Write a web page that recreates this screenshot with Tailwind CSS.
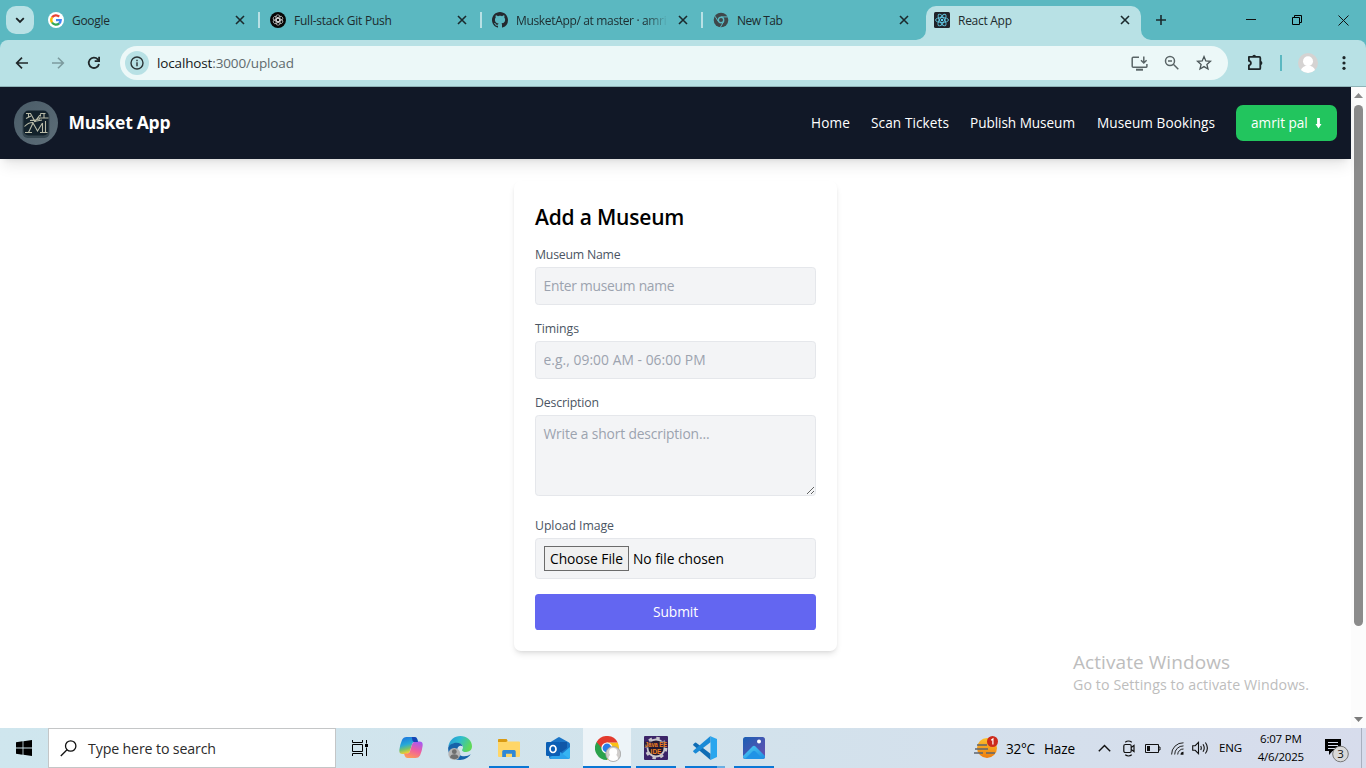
<!DOCTYPE html>
<html lang="en">
<head>
<meta charset="utf-8">
<title>React App</title>
<script src="https://cdn.jsdelivr.net/npm/@tailwindcss/browser@4"></script>
</head>
<body class="w-[1366px] h-[768px] overflow-hidden bg-white flex flex-col font-['Open_Sans','Noto_Sans',sans-serif]">

<!-- Tab strip -->
<div class="h-10 shrink-0 bg-[#5bb8c1] flex text-xs leading-4 text-[#1d2b2e]">
  <div class="w-10 shrink-0 pl-1.5 pt-1.5">
    <div class="size-7 rounded-[10px] bg-[#b8e1e5] flex items-center justify-center">
      <svg class="size-3" viewBox="0 0 12 12" fill="none" stroke="#1b2224" stroke-width="1.8"><path d="M2.2 4.2 6 8l3.8-3.8"/></svg>
    </div>
  </div>
  <div class="w-[222px] shrink-0 flex items-center pl-2 pr-0.5">
    <svg class="size-4 shrink-0" viewBox="0 0 16 16"><circle cx="8" cy="8" r="8" fill="#fff"/><g fill="none" stroke-width="2.3"><path d="M4.05 5.4A4.7 4.7 0 0 1 11.2 4.6" stroke="#ea4335"/><path d="M4.1 10.6A4.7 4.7 0 0 1 4.1 5.3" stroke="#fbbc05"/><path d="M11.2 11.4A4.7 4.7 0 0 1 4 10.500" stroke="#34a853"/><path d="M8 8.2h4.7A4.7 4.7 0 0 1 11.1 11.5" stroke="#4285f4"/></g></svg>
    <span class="ml-2 flex-1 pt-0.5 tracking-[-0.29px]">Google</span>
    <svg class="size-4" viewBox="0 0 16 16" stroke="#1b2a2d" stroke-width="1.6"><path d="m4 4 8 8M12 4l-8 8"/></svg>
    <span class="ml-[10px] w-0.5 h-4 bg-[#b8e1e5]"></span>
  </div>
  <div class="w-[222px] shrink-0 flex items-center pl-2 pr-0.5">
    <svg class="size-4 shrink-0" viewBox="0 0 16 16"><circle cx="8" cy="8" r="8" fill="#070707"/><g fill="none" stroke="#d6d6d6" stroke-width=".7"><rect x="5.9" y="2.800" width="4" height="7" rx="2"/><rect x="5.9" y="2.800" width="4" height="7" rx="2" transform="rotate(60 8 8)"/><rect x="5.9" y="2.800" width="4" height="7" rx="2" transform="rotate(120 8 8)"/><rect x="5.9" y="2.800" width="4" height="7" rx="2" transform="rotate(180 8 8)"/><rect x="5.9" y="2.800" width="4" height="7" rx="2" transform="rotate(240 8 8)"/><rect x="5.9" y="2.800" width="4" height="7" rx="2" transform="rotate(300 8 8)"/></g></svg>
    <span class="ml-2 flex-1 pt-0.5 tracking-[-0.23px]">Full-stack Git Push</span>
    <svg class="size-4" viewBox="0 0 16 16" stroke="#1b2a2d" stroke-width="1.6"><path d="m4 4 8 8M12 4l-8 8"/></svg>
    <span class="ml-[10px] w-0.5 h-4 bg-[#b8e1e5]"></span>
  </div>
  <div class="w-[221px] shrink-0 flex items-center pl-2 pr-0.5">
    <svg class="size-4 shrink-0" viewBox="0 0 16 16" fill="#24292f"><path d="M8 0C3.580 0 0 3.580 0 8c0 3.540 2.290 6.530 5.470 7.590.4.070.55-.17.55-.38 0-.19-.010-.82-.010-1.490-2.010.37-2.530-.49-2.690-.94-.090-.23-.48-.94-.82-1.130-.28-.15-.68-.52-.010-.53.63-.010 1.080.58 1.230.82.72 1.210 1.870.87 2.330.66.070-.52.28-.87.510-1.070-1.780-.2-3.640-.89-3.640-3.950 0-.87.310-1.590.82-2.150-.080-.2-.36-1.020.080-2.120 0 0 .67-.21 2.200.82.64-.18 1.320-.27 2-.27s1.360.090 2 .27c1.530-1.040 2.200-.82 2.200-.82.44 1.100.16 1.920.080 2.120.51.56.82 1.270.82 2.150 0 3.070-1.870 3.750-3.650 3.950.29.25.54.73.54 1.480 0 1.070-.010 1.930-.010 2.200 0 .21.15.46.55.38A8.010 8.010 0 0 0 16 8c0-4.420-3.580-8-8-8z"/></svg>
    <span class="ml-2 w-[152px] pt-0.5 whitespace-nowrap tracking-[-0.34px] bg-linear-to-r from-[#1d2b2e] from-85% to-transparent bg-clip-text text-transparent">MusketApp/ at master · amri</span>
    <svg class="size-4 ml-auto" viewBox="0 0 16 16" stroke="#1b2a2d" stroke-width="1.6"><path d="m4 4 8 8M12 4l-8 8"/></svg>
    <span class="ml-[10px] w-0.5 h-4 bg-[#b8e1e5]"></span>
  </div>
  <div class="w-[221px] shrink-0 flex items-center pl-2">
    <svg class="size-4 shrink-0" viewBox="0 0 16 16"><circle cx="8" cy="8" r="7.3" fill="#3f474a"/><circle cx="8" cy="8" r="2.700" fill="#3f474a" stroke="#5bb8c1" stroke-width="1.400"/><path d="M8 4.900h7M5.300 9.500 2 4.200M10.700 9.500l-3.500 6" stroke="#5bb8c1" stroke-width="1" fill="none"/></svg>
    <span class="ml-2 flex-1 pt-0.5 tracking-[-0.5px]">New Tab</span>
    <svg class="size-4 mr-[14px]" viewBox="0 0 16 16" stroke="#1b2a2d" stroke-width="1.6"><path d="m4 4 8 8M12 4l-8 8"/></svg>
  </div>
  <div class="relative w-[215px] shrink-0 mt-1.5 h-[34px] rounded-t-[10px] bg-[#b8e1e5] flex items-center pl-2 pb-[6px]">
    <svg class="absolute -left-2.5 bottom-0 size-2.5" viewBox="0 0 10 10" fill="#b8e1e5"><path d="M10 0v10H0A10 10 0 0 0 10 0z"/></svg>
    <svg class="absolute -right-2.5 bottom-0 size-2.5" viewBox="0 0 10 10" fill="#b8e1e5"><path d="M0 0v10h10A10 10 0 0 1 0 0z"/></svg>
    <svg class="size-4 shrink-0" viewBox="0 0 16 16"><rect width="16" height="16" rx="1.5" fill="#20232a"/><g fill="none" stroke="#61c6e0" stroke-width=".9"><ellipse cx="8" cy="8" rx="6.500" ry="2.500"/><ellipse cx="8" cy="8" rx="6.500" ry="2.500" transform="rotate(60 8 8)"/><ellipse cx="8" cy="8" rx="6.500" ry="2.500" transform="rotate(120 8 8)"/></g><circle cx="8" cy="8" r="1.2" fill="#61dafb"/></svg>
    <span class="ml-2 flex-1 pt-0.5 tracking-[-0.28px]">React App</span>
    <svg class="size-4 mr-2" viewBox="0 0 16 16" stroke="#1b2a2d" stroke-width="1.6"><path d="m4 4 8 8M12 4l-8 8"/></svg>
  </div>
  <div class="flex-1 flex items-center pl-[14px]">
    <svg class="size-3" viewBox="0 0 12 12" stroke="#1b2a2d" stroke-width="1.6"><path d="M6 1v10M1 6h10"/></svg>
    <svg class="ml-[79px] w-[10px] h-3" viewBox="0 0 10 12" stroke="#111" stroke-width="1"><path d="M0 5.500h10"/></svg>
    <svg class="ml-[36px] w-[10px] h-[10px]" viewBox="0 0 10 10" fill="none" stroke="#000" stroke-width="1"><path d="M.5 2.500h7v7h-7zM2.500 2.500v-2h7v7h-2"/></svg>
    <svg class="ml-[36px] w-[11px] h-[11px]" viewBox="0 0 11 11" stroke="#111" stroke-width="1"><path d="m.5.5 10 10M10.500.5l-10 10"/></svg>
  </div>
</div>

<!-- Toolbar -->
<div class="h-[47px] shrink-0 bg-[#5bb8c1]">
<div class="h-full rounded-t-lg bg-[#b8e1e5] border-b border-[#8fb4b8] flex items-center">
  <svg class="ml-[14px] size-4" viewBox="0 0 16 16" fill="none" stroke="#20282a" stroke-width="1.7"><path d="M14 8H3M8 2.700 2.700 8 8 13.300"/></svg>
  <svg class="ml-5 size-4" viewBox="0 0 16 16" fill="none" stroke="#7c9a9e" stroke-width="1.6"><path d="M2 8h11M8 2.700 13.300 8 8 13.300"/></svg>
  <svg class="ml-5 size-4" viewBox="0 0 16 16" fill="none" stroke="#20282a" stroke-width="1.8"><path d="M13 9a5.200 5.200 0 1 1-1.200-4.700L13 5.700"/><path d="M13.100 1.800v4.400H8.700"/></svg>
  <div class="ml-[18px] w-[1108px] h-[34px] rounded-full bg-[#ecf8f8] flex items-center">
    <div class="ml-[5px] size-6 rounded-full bg-[#b8e1e5] flex items-center justify-center">
      <svg class="size-[14px]" viewBox="0 0 14 14" fill="none" stroke="#2b3436" stroke-width="1.4"><circle cx="7" cy="7" r="6"/><path d="M7 6.300v4M7 3.700v1.500"/></svg>
    </div>
    <span class="ml-2 text-[13.5px] leading-5 tracking-[-0.14px] text-[#5f6b6e]"><span class="text-[#15191a]">localhost</span>:3000/upload</span>
    <svg class="ml-auto w-[17px] h-[15px]" viewBox="0 0 17 15" fill="none" stroke="#5a6567" stroke-width="1.5"><path d="M8 1.200H2.200q-1 0-1 1v8q0 1 1 1h13.100q.6 0 .6-.7V8M12.800.5v6M10 4.200 12.800 7l2.800-2.800"/><path d="M5 13.700h7" stroke-width="2"/></svg>
    <svg class="ml-4 size-4" viewBox="0 0 16 16" fill="none" stroke="#5a6567" stroke-width="1.5"><circle cx="6" cy="6" r="4.500"/><path d="m9.300 9.300 5 5M4 6h4"/></svg>
    <svg class="ml-4 mr-4 size-4" viewBox="0 0 16 16" fill="none" stroke="#4a5557" stroke-width="1.3"><path d="m8 1.600 1.800 4.300 4.700.4-3.600 3.100 1.100 4.600L8 11.600 4 14l1.100-4.600-3.600-3.100 4.700-.4z"/></svg>
  </div>
  <svg class="ml-[18px] w-[18px] h-[18px] -mt-0.5" viewBox="0 0 18 18" fill="none" stroke="#1d2628" stroke-width="1.8"><path d="M2.900 3.900h10.400q1 0 1 1v10.300q0 1-1 1H2.900v-3.900q2-.3 2-2.200t-2-2.200z" stroke-linejoin="round"/><path d="M6.300 3.600q.1-1.900 1.900-1.900T10 3.600zM14.500 8q1.900.2 1.900 2t-1.900 2z" fill="#1d2628" stroke="none"/></svg>
  <span class="ml-4 w-0.5 h-4 bg-[#5bb8c1]"></span>
  <svg class="ml-4 size-5" viewBox="0 0 20 20"><defs><clipPath id="av"><circle cx="10" cy="10" r="10"/></clipPath></defs><g clip-path="url(#av)"><rect width="20" height="20" fill="#d5d3d2"/><circle cx="10" cy="8.300" r="5" fill="#fff"/><path d="M2.500 20q0-6 5.500-7.300h4q5.500 1.300 5.500 7.300z" fill="#fff"/></g></svg>
  <svg class="ml-[18px] mr-2 size-4" viewBox="0 0 16 16" fill="#1d2628"><circle cx="8" cy="2.700" r="1.600"/><circle cx="8" cy="8" r="1.600"/><circle cx="8" cy="13.300" r="1.600"/></svg>
</div>
</div>

<!-- Page -->
<div class="h-[641px] shrink-0 flex">
  <main class="relative flex-1 flex flex-col items-center">
    <nav class="w-full h-[72px] shrink-0 bg-[#111827] flex items-center px-[14px] text-[13.6px] font-medium text-white shadow-[0_9px_14px_-3px_rgba(0,0,0,0.1),0_4px_6px_-4px_rgba(0,0,0,0.1)]">
      <svg class="size-11" viewBox="0 0 44 44"><defs><linearGradient id="lg" x1="0" y1="0" x2="1" y2="1"><stop offset="0" stop-color="#4a5c68"/><stop offset="1" stop-color="#5d6d78"/></linearGradient></defs><circle cx="22" cy="22" r="22" fill="url(#lg)"/><rect x="8.500" y="11" width="27" height="26" rx="5" fill="#34454f"/><rect x="9.500" y="9.500" width="25" height="25" rx="5" fill="#12212b"/><g fill="none" stroke="#b9bba8" stroke-width="1.100"><path d="M12 12.500h4.500l4.500 8 6-8h4.500M14.500 12.500v4M26.500 12.500v3M30 12.500v5M24.500 17h10M12 17.500l5-2.500M16 19.500l10-1.500"/><path d="M10.500 25.500q4-4.500 9-4M11 31.500h7M14.500 31.500 19 22l4.500 8 5-8M28.500 22v9.500M31.500 20v11.500M26 31.500h7.500M20 20.500l8-1.500"/></g></svg>
      <span class="ml-[10.5px] -mt-px text-[17.5px] font-bold tracking-[-0.25px]">Musket App</span>
      <div class="ml-auto flex items-center pt-px">
        <span class="w-[60px] tracking-[0.15px]">Home</span>
        <span class="w-[99px] tracking-[0.1px]">Scan Tickets</span>
        <span class="w-[127px] tracking-[-0.05px]">Publish Museum</span>
        <span class="w-[139px] tracking-[0.07px]">Museum Bookings</span>
        <button class="-mt-px w-[101px] h-9 rounded-[7px] bg-[#22c55e] flex items-center pl-[15px]">amrit pal<svg class="ml-[7px] w-[7px] h-[11px]" viewBox="0 0 7 11" fill="#fff"><path d="M2.100 0h2.800v6h1.600L3.500 10.500.5 6h1.600z"/></svg></button>
      </div>
    </nav>

    <form class="mt-[22px] w-[323px] h-[470px] rounded-[7px] bg-white shadow-[0_4px_6px_-1px_rgba(0,0,0,0.1),0_2px_4px_-2px_rgba(0,0,0,0.1)] pt-[21px] px-[21px] flex flex-col text-[13.8px] leading-5">
      <h2 class="h-[30px] text-[21px] leading-[30px] font-semibold tracking-[-0.2px] text-black">Add a Museum</h2>
      <label class="mt-[14px] h-[18px] text-[12.3px] leading-[18px] tracking-[-0.22px] text-[#4b5563]">Museum Name</label>
      <input type="text" placeholder="Enter museum name" class="mt-[3px] h-[38px] w-[281px] rounded-[3.6px] border border-[#e5e7eb] bg-[#f3f4f6] pl-[7.5px] pr-2 pb-0.5 tracking-[-0.25px] placeholder:text-[#9ca3af]">
      <label class="mt-[15px] h-[18px] text-[12.3px] leading-[18px] tracking-[-0.07px] text-[#4b5563]">Timings</label>
      <input type="text" placeholder="e.g., 09:00 AM - 06:00 PM" class="mt-[3px] h-[38px] w-[281px] rounded-[3.6px] border border-[#e5e7eb] bg-[#f3f4f6] pl-[7.5px] pr-2 pb-0.5 tracking-[0.06px] placeholder:text-[#9ca3af]">
      <label class="mt-[15px] h-[18px] text-[12.3px] leading-[18px] tracking-[-0.17px] text-[#4b5563]">Description</label>
      <textarea placeholder="Write a short description..." class="mt-[3px] h-[81px] w-[281px] rounded-[3.6px] border border-[#e5e7eb] bg-[#f3f4f6] pl-[7.5px] pr-2 pt-2 tracking-[-0.14px] placeholder:text-[#9ca3af]"></textarea>
      <label class="mt-[21px] h-[18px] text-[12.3px] leading-[18px] tracking-[-0.07px] text-[#4b5563]">Upload Image</label>
      <div class="mt-[3px] h-[41px] w-[281px] rounded-[3.6px] border border-[#e5e7eb] bg-[#f3f4f6] px-2 flex items-center text-black">
        <button type="button" class="w-[85px] h-[25px] border border-[#6b6b6b] bg-[#efefef] tracking-[-0.05px] whitespace-nowrap">Choose File</button>
        <span class="ml-1 tracking-[-0.03px]">No file chosen</span>
      </div>
      <button type="button" class="mt-[15px] h-9 w-[281px] rounded-[3.6px] bg-[#6366f1] font-medium text-white tracking-[-0.1px]">Submit</button>
    </form>

    <div class="absolute left-[1073px] top-[563px] whitespace-nowrap text-[#bdbdbd]">
      <div class="text-[19px] leading-6 tracking-[0.07px]">Activate Windows</div>
      <div class="text-[14.2px] leading-[22px] tracking-[0.1px]">Go to Settings to activate Windows.</div>
    </div>
  </main>
  <div class="w-[15px] shrink-0 bg-[#fcfcfc] flex flex-col items-center py-[6px]">
    <svg class="w-[9px] h-[5px] shrink-0" viewBox="0 0 9 5" fill="#8b8b8b"><path d="M0 5h9L4.500 0z"/></svg>
    <div class="mt-[7px] w-[9px] h-[521px] rounded-full bg-[#8b8b8b]"></div>
    <svg class="mt-auto w-[9px] h-[5px] shrink-0" viewBox="0 0 9 5" fill="#7b7b7b"><path d="M0 0h9L4.500 5z"/></svg>
  </div>
</div>

<!-- Taskbar -->
<div class="h-10 shrink-0 bg-linear-to-r from-[#cfe6ee] via-[#d2e3ec] to-[#d7dcec] flex items-center text-black">
  <svg class="ml-4 size-4" viewBox="0 0 16 16"><path d="M0 2.200 6.600 1.300v6.300H0zM7.400 1.200 16 0v7.600H7.400zM0 8.400h6.600v6.300L0 13.800zM7.400 8.400H16V16l-8.600-1.200z"/></svg>
  <div class="ml-4 w-[288px] h-10 border border-[#c4c6c7] bg-white flex items-center">
    <svg class="ml-[11px] size-[17px]" viewBox="0 0 17 17" fill="none" stroke="#111" stroke-width="1.3"><circle cx="10.700" cy="6" r="5.200"/><path d="M7 9.700.8 16"/></svg>
    <span class="ml-[11px] pt-0.5 text-[14.2px] leading-5 tracking-[-0.14px] text-[#2b2b2b]">Type here to search</span>
  </div>
  <svg class="ml-4 size-4" viewBox="0 0 16 16" fill="none" stroke="#000" stroke-width="1"><path d="M.5 0v2.500h10V0M.5 16v-2.500h10V16M.5 4.500h10v7H.5zM14.500 0v3.500M14.500 7.500V16"/><path d="M13 4h3v3h-3z" fill="#000" stroke="none"/></svg>
  <div class="ml-[19px] flex gap-px">
    <div class="w-12 h-10 flex justify-center pt-2">
      <svg class="size-6" viewBox="0 0 24 24"><defs><linearGradient id="c1" x1="0" y1="0" x2=".3" y2="1"><stop offset="0" stop-color="#1b6fe0"/><stop offset=".5" stop-color="#27a9d8"/><stop offset=".75" stop-color="#7ac36a"/><stop offset="1" stop-color="#ffcf2b"/></linearGradient><linearGradient id="c2" x1=".7" y1="0" x2=".3" y2="1"><stop offset="0" stop-color="#a85af0"/><stop offset=".5" stop-color="#ef5f9e"/><stop offset="1" stop-color="#ff9a56"/></linearGradient></defs><path d="M7.500 1h8q2 0 2.700 2l.8 3h-3.500q-1.800 0-2.400 2l-2.300 7.500q-.8 2.500-3.300 2.500H3.500Q-.2 18 .4 13.500q.5-4.500 2.600-9.500Q4.300 1 7.500 1z" fill="url(#c1)"/><path d="M16.500 22h-8q-2 0-2.700-2L5 17.500h3.500q1.800 0 2.400-2L13.200 8q.8-2.500 3.300-2.500h4q3.700 0 3.100 4.500-.5 4.500-2.600 9.500-1.300 2.500-4.500 2.500z" fill="url(#c2)"/><path d="M12.800 1h2.700q2 0 2.700 2l.8 3h-3.500q-1.500 0-2-1.500z" fill="#1545b5"/></svg>
    </div>
    <div class="w-12 h-10 flex justify-center pt-2">
      <svg class="size-6" viewBox="0 0 24 24"><defs><linearGradient id="e1" x1="0" y1="0" x2="1" y2=".4"><stop offset="0" stop-color="#2494d8"/><stop offset=".5" stop-color="#2ebccf"/><stop offset="1" stop-color="#5fd85a"/></linearGradient></defs><path d="M.3 10.500C1.500 4 6.500 0 12.300 0 19 0 24 4.700 24 10.300c0 3.600-2.600 5.700-5.800 5.700-2.700 0-4.200-1-4.200-1.800 0-.7 1-1.100 1-2.900C15 8.700 12.300 7 9 7 5.600 7 2.300 8.700.3 10.500z" fill="url(#e1)"/><path d="M.2 11.500C1.400 8.300 5.200 6.800 8.800 6.800c3.200 0 5.500 1.500 6 3.700-1.300-1-3.800-1-5 1-1.800 3 .3 8 5.200 8.700 3 .4 5.500-.5 7.700-1.900C20.500 21.600 16.700 24 12 24 4.800 24-.5 18.200.2 11.500z" fill="#1663a9"/><circle cx="6.300" cy="18" r="6" fill="#b5b5b5"/><circle cx="6.300" cy="15.700" r="2.400" fill="#6e6e6e"/><path d="M2 21.500q.5-3.200 4.300-3.200t4.300 3.200q-4 3.500-8.600 0z" fill="#6e6e6e"/></svg>
    </div>
    <div class="w-12 h-10 flex flex-col items-center justify-between pt-[11px]">
      <svg class="w-[22px] h-[19px]" viewBox="0 0 22 19"><path d="M0 1q0-1 1-1h7.500l1.500 2.500H21q1 0 1 1V17q0 1-1 1H1q-1 0-1-1z" fill="#ffd667"/><path d="M0 1q0-1 1-1h7.500l1 1.500L8.300 3H0z" fill="#d99a13"/><path d="M4.200 18v-5.500q0-1.500 1.500-1.500h10.500q1.500 0 1.500 1.500V18H14v-3.300H8V18z" fill="#2f88d6"/></svg>
      <span class="w-10 h-0.5 bg-[#0a77d5]"></span>
    </div>
    <div class="w-12 h-10 flex justify-center pt-[9px]">
      <svg class="w-6 h-[22px]" viewBox="0 0 24 22"><path d="M3 6 12 .4q1-.6 2 0L23 5.500q1 .7 1 2V20q0 2-2 2H5q-2 0-2-2z" fill="#1a74c6"/><path d="M14 5h7v6l-7 5z" fill="#0f57a8"/><path d="M10 22 24 10v10q0 2-2 2z" fill="#35b4f2"/><path d="M4 20l10-5 9 6.500q-.5.500-1.500.5H5.500Q4 22 4 20z" fill="#2ba3ec"/><rect y="5" width="14" height="14" rx="1.200" fill="#0b5fb5"/><ellipse cx="7" cy="12" rx="3" ry="3.500" fill="none" stroke="#fff" stroke-width="1.700"/></svg>
    </div>
    <div class="w-12 h-10 bg-[#edf4f8] flex flex-col items-center justify-between pt-2">
      <svg class="w-[26px] h-[26px] ml-0.5" viewBox="0 0 26 26"><path d="M1.600 6A12 12 0 0 0 12 24l5.200-9L12 12z" fill="#2ba24c"/><path d="M12 6.500h10.700A12 12 0 0 1 12 24l5-9z" fill="#fbc116"/><path d="M1.600 6 6.700 15 12 12z" fill="#2ba24c"/><path d="M1.600 6A12 12 0 0 1 22.700 6.500H12L6.800 12z" fill="#e33b2e"/><circle cx="12" cy="12" r="5.600" fill="#fff"/><circle cx="12" cy="12" r="4.400" fill="#2b7de9"/><circle cx="18.200" cy="18" r="7.500" fill="#d0cdcb" stroke="#999" stroke-width=".7"/><circle cx="18.200" cy="16" r="4" fill="#fff"/><path d="M13.400 23.200q.2-4.200 3-4.700h3.600q2.800.5 3 4.700-4.800 3.500-9.600 0z" fill="#fff"/></svg>
      <span class="w-12 h-0.5 bg-[#0a77d5]"></span>
    </div>
    <div class="w-12 h-10 flex flex-col items-center justify-between pt-2">
      <svg class="size-6" viewBox="0 0 24 24"><rect width="24" height="24" rx="1" fill="#3b2468"/><circle cx="12" cy="12" r="8.500" fill="#22182f" stroke="#c9c6cc" stroke-width="1.800"/><circle cx="12" cy="12" r="10.200" fill="none" stroke="#c9c6cc" stroke-width="2.300" stroke-dasharray="3.500 4.510"/><rect y="5.500" width="24" height="6" fill="#2a1b38" opacity=".75"/><text x="12" y="11" text-anchor="middle" textLength="22" lengthAdjust="spacingAndGlyphs" font-family="Liberation Sans" font-weight="700" font-size="6.500" fill="#f08021">Java EE</text><text x="12" y="17.500" text-anchor="middle" font-family="Liberation Sans" font-weight="700" font-size="6.500" fill="#f08021">IDE</text></svg>
      <span class="w-10 h-0.5 bg-[#0a77d5]"></span>
    </div>
    <div class="w-12 h-10 flex flex-col items-center justify-between pt-2">
      <svg class="size-6" viewBox="0 0 24 24"><path d="M17.500.2 24 3v18l-6.500 3z" fill="#2aa6ee"/><path d="M.3 8.300 2 6.700q.6-.4 1.200 0L17.500 17.800V24L.5 9.600q-.6-.7-.2-1.300z" fill="#0f6cb4"/><path d="M.3 15.700 2 17.300q.6.400 1.200 0L17.500 6.200V0L.5 14.400q-.6.700-.2 1.300z" fill="#1a8ad6"/></svg>
      <div class="flex w-10"><span class="w-8 h-0.5 bg-[#0a77d5]"></span><span class="w-2 h-0.5 bg-[#69aee3]"></span></div>
    </div>
    <div class="w-12 h-10 flex flex-col items-center justify-between pt-[9px]">
      <svg class="w-[22px] h-[22px]" viewBox="0 0 22 22"><defs><linearGradient id="p1" x1="0" y1="0" x2="1" y2="1"><stop offset="0" stop-color="#1a5fb4"/><stop offset="1" stop-color="#6b4fb0"/></linearGradient><linearGradient id="p2" x1="0" y1="0" x2="1" y2="1"><stop offset="0" stop-color="#4fd0f5"/><stop offset="1" stop-color="#1b88e0"/></linearGradient><clipPath id="pc"><rect width="22" height="22" rx="2.500"/></clipPath></defs><g clip-path="url(#pc)"><rect width="22" height="22" fill="url(#p1)"/><path d="M-1 20 9.500 9.500q1.500-1.300 3 0L23 20v3H-1z" fill="url(#p2)"/><path d="M2 22 9.500 14.500q1.500-1.300 3 0L20 22z" fill="#1f93e6"/></g><circle cx="16" cy="4.500" r="2" fill="#fff"/></svg>
      <span class="w-10 h-0.5 bg-[#0a77d5]"></span>
    </div>
  </div>
  <svg class="ml-[196px] size-6" viewBox="0 0 24 24"><defs><linearGradient id="w1" x1="0" y1="0" x2="0" y2="1"><stop offset="0" stop-color="#fbc02d"/><stop offset="1" stop-color="#ef7d0e"/></linearGradient></defs><circle cx="13" cy="12" r="10" fill="url(#w1)"/><path d="M3 9h10M1 13h13M0 17h9M12 17h9" stroke="#5d6570" stroke-width="1.500"/><circle cx="18.500" cy="5.500" r="5.500" fill="#cc2a1c"/><path d="M17.200 4.200 18.900 3v5.500" fill="none" stroke="#fff" stroke-width="1.200"/></svg>
  <span class="ml-2 w-[38px] pt-px text-[13.6px] leading-5 tracking-[-0.31px]">32°C</span>
  <span class="w-[54px] pt-px text-[13.6px] leading-5 tracking-[-0.19px]">Haze</span>
  <svg class="w-[13px] h-2" viewBox="0 0 13 8" fill="none" stroke="#111" stroke-width="1.4"><path d="M.8 7.300 6.500 1.500l5.700 5.800"/></svg>
  <svg class="ml-3 w-3 h-[17px]" viewBox="0 0 12 17" fill="none" stroke="#111" stroke-width="1.2"><rect x=".8" y="4.500" width="7.400" height="8" rx="1.500"/><path d="m8.200 7.500 2.800-2v6l-2.800-2M2.200 2.300Q5.500-.3 8.800 2.300M2.200 14.700q3.300 2.600 6.600 0"/></svg>
  <svg class="ml-[10px] w-4 h-[9px]" viewBox="0 0 16 9" fill="none" stroke="#111" stroke-width="1"><path d="M.5.500h13v8H.5zM13.500 3h1.500v3h-1.500"/><path d="M2 2h3v5H2z" fill="#111" stroke="none"/></svg>
  <svg class="ml-[10px] w-[13px] h-[13px]" viewBox="0 0 13 13" fill="none" stroke="#222" stroke-width="1"><path d="M.6 12.500A11.500 11.500 0 0 1 12.500.8M3.700 12.500a8.500 8.500 0 0 1 8.800-8.600M6.700 12.500A5.600 5.600 0 0 1 12.500 7"/><path d="M9.500 12.800q0-3 3-3v3z" fill="#111" stroke="none"/></svg>
  <svg class="ml-2 w-[17px] h-[14px]" viewBox="0 0 17 14" fill="none" stroke="#111" stroke-width="1.1"><path d="M.7 4.700h2.500L6.500 1.400v11.200L3.200 9.300H.7zM8.700 5q1.200 2 0 4M11 3.300q2.500 3.700 0 7.400M13.400 1.500q4 5.500 0 11"/></svg>
  <span class="ml-[10px] text-[11.5px] leading-4 tracking-[-0.2px]">ENG</span>
  <div class="ml-3 w-[54px] text-[11.5px] leading-[18px] text-center tracking-[-0.22px] -mt-px"><div>6:07 PM</div><div>4/6/2025</div></div>
  <svg class="ml-[17px] size-6 mt-[6px]" viewBox="0 0 24 24"><path d="M0 0h16v12H7.500l-3.500 4v-4H0z"/><path d="M3 3.500h10M3 6.500h10M3 9.500h7" stroke="#d7dcec" stroke-width="1"/><circle cx="15.500" cy="15" r="7.800" fill="#d9d9d9" stroke="#777" stroke-width="1"/><text x="15.500" y="19" text-anchor="middle" font-family="Open Sans" font-size="11.500" fill="#111">3</text></svg>
  <span class="ml-auto mr-1 w-px h-10 bg-[#a9b0bf]"></span>
</div>
</body>
</html>
